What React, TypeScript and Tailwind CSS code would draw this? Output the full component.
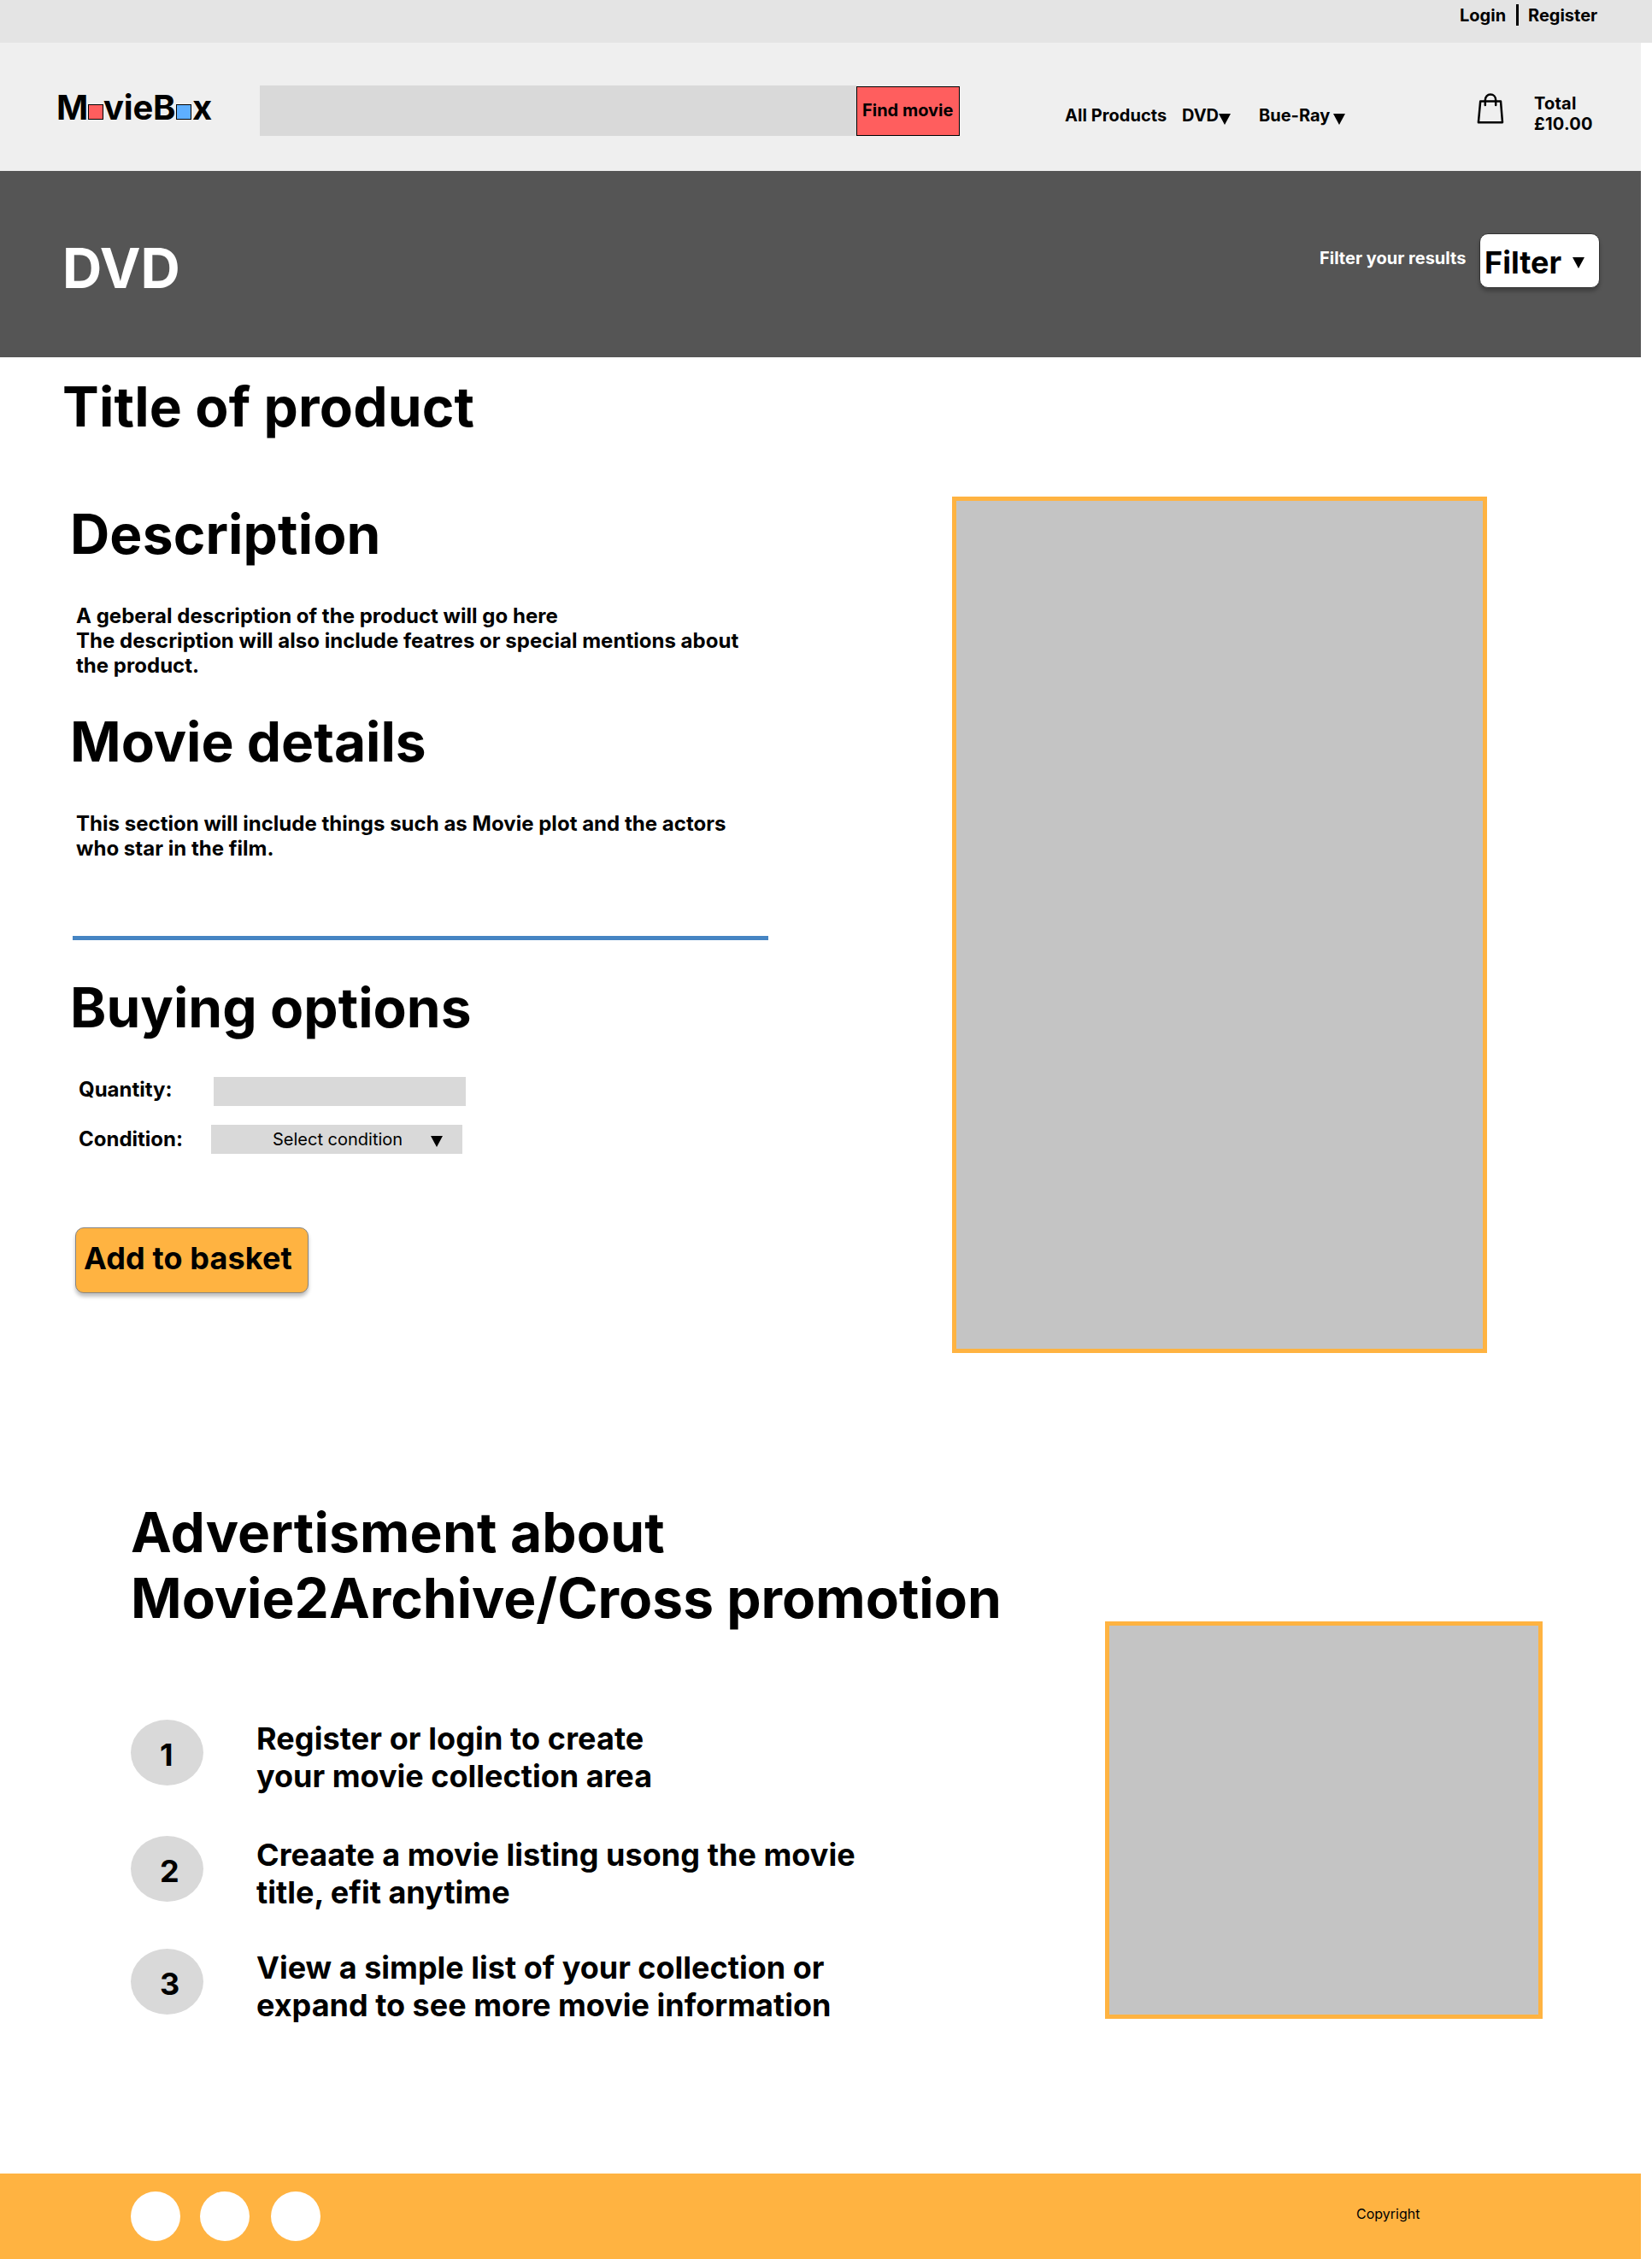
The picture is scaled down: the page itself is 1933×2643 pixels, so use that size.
import React from "react";

function Caret({ className = "" }: { className?: string }) {
  return (
    <svg viewBox="0 0 14 13" className={"h-[13px] w-[14px] shrink-0 " + className}>
      <path d="M0 0H14L7 13Z" fill="#000" />
    </svg>
  );
}

function BagIcon({ className = "" }: { className?: string }) {
  return (
    <svg
      viewBox="0 0 32 36"
      fill="none"
      stroke="#000"
      strokeWidth="2.5"
      strokeLinecap="round"
      strokeLinejoin="round"
      className={"h-[36px] w-[32px] shrink-0 " + className}
    >
      <path d="M4.2 9.4H28L30 34.2H1.9Z" />
      <path d="M9.8 14V8.2C9.8 4 12.6 1.5 16 1.5S22.2 4 22.2 8.2V14" />
    </svg>
  );
}

function TopBar() {
  return (
    <div className="flex h-[50px] w-full items-start bg-[#e4e4e4] pt-[6px] pl-[1708px] text-[20px] leading-[24px] font-bold">
      <a className="w-[66px]">Login</a>
      <span className="mt-[-1px] h-[25px] w-[3px] bg-black" />
      <a className="ml-[11px]">Register</a>
    </div>
  );
}

function Header() {
  return (
    <header className="flex h-[150px] w-[1920px] items-start bg-[#efefef] text-[20px] leading-[24px] font-bold">
      <div className="mt-[52px] ml-[66px] flex w-[238px] items-start text-[40px] leading-[48px]">
        <span className="w-[37px]">M</span>
        <span className="mt-[20px] h-[18px] w-[18px] shrink-0 border border-black bg-[#ff5e5e]" />
        <span className="w-[85px] tracking-[-0.2px]">vieB</span>
        <span className="mt-[20px] h-[18px] w-[18px] shrink-0 border border-black bg-[#5eafff]" />
        <span className="ml-px">x</span>
      </div>
      <div className="mt-[50px] h-[59px] w-[698px] bg-[#d9d9d9]" />
      <button className="mt-[51px] flex h-[58px] w-[121px] items-start border border-black bg-[#ff5e5e] pt-[15px] pl-[6px] font-bold whitespace-nowrap">
        Find movie
      </button>
      <nav className="mt-[73px] ml-[123px] flex items-start whitespace-nowrap">
        <a className="w-[137px] tracking-[0.05px]">All Products</a>
        <a className="flex w-[90px]">
          <span className="w-[43px]">DVD</span>
          <Caret className="mt-[10px]" />
        </a>
        <a className="flex w-[101px]">
          <span className="w-[87px]">Bue-Ray</span>
          <Caret className="mt-[10px]" />
        </a>
      </nav>
      <BagIcon className="mt-[59px] ml-[154px]" />
      <div className="mt-[59px] ml-[35px] tracking-[0.2px]">
        <div>Total</div>
        <div>£10.00</div>
      </div>
    </header>
  );
}

function CategoryBar() {
  return (
    <div className="flex h-[218px] w-[1920px] items-start bg-[#555555] font-bold text-white">
      <h1 className="mt-[75px] ml-[73px] w-[1471px] text-[64px] leading-[77px]">DVD</h1>
      <span className="mt-[90px] w-[187px] text-[20px] leading-[24px] whitespace-nowrap">
        Filter your results
      </span>
      <button className="mt-[73px] flex h-[64px] w-[141px] items-start rounded-[10px] border border-[#333] bg-white text-black shadow-[0_4px_4px_rgba(0,0,0,0.25)]">
        <span className="mt-[11px] ml-[5px] w-[103px] text-left text-[36px] leading-[44px] font-bold">
          Filter
        </span>
        <Caret className="mt-[27px]" />
      </button>
    </div>
  );
}

function Product() {
  return (
    <section className="flex h-[1336px] w-[1920px] items-start">
      <div className="w-[1114px] pt-[19px] text-[24px] leading-[29px] font-bold">
        <h2 className="ml-[73px] text-[64px] leading-[77px] tracking-[0.16px]">Title of product</h2>
        <h2 className="mt-[72px] ml-[82px] text-[64px] leading-[77px] tracking-[0.15px]">Description</h2>
        <p className="mt-[43px] ml-[89px] tracking-[0.025px] whitespace-nowrap">
          A geberal description of the product will go here
          <br />
          The description will also include featres or special mentions about
          <br />
          the product.
        </p>
        <h2 className="mt-[36px] ml-[82px] text-[64px] leading-[77px]">Movie details</h2>
        <p className="mt-[43px] ml-[89px] tracking-[0.025px] whitespace-nowrap">
          This section will include things such as Movie plot and the actors
          <br />
          who star in the film.
        </p>
        <div className="mt-[88px] ml-[85px] h-[5px] w-[814px] bg-[#4685c3]" />
        <h2 className="mt-[40px] ml-[82px] text-[64px] leading-[77px] tracking-[0.06px]">Buying options</h2>
        <div className="mt-[43px] ml-[92px] flex items-start">
          <span className="w-[158px]">Quantity:</span>
          <div className="h-[34px] w-[295px] bg-[#d9d9d9]" />
        </div>
        <div className="mt-[22px] ml-[92px] flex items-start">
          <span className="mt-[2px] w-[155px]">Condition:</span>
          <div className="flex h-[34px] w-[294px] items-start bg-[#d9d9d9] text-[20px] leading-[24px] font-normal">
            <span className="mt-[5px] ml-[72px] w-[185px]">Select condition</span>
            <Caret className="mt-[13px]" />
          </div>
        </div>
        <button className="mt-[86px] ml-[88px] flex h-[77px] w-[273px] items-start rounded-[10px] border border-[#858585] bg-[#ffb341] pt-[13px] pl-[9px] text-[36px] leading-[44px] font-bold tracking-[0.12px] whitespace-nowrap shadow-[0_4px_4px_rgba(0,0,0,0.25)]">
          Add to basket
        </button>
      </div>
      <div className="mt-[163px] h-[1002px] w-[626px] border-5 border-[#ffb341] bg-[#c4c4c4]" />
    </section>
  );
}

function Step({ n, className, children }: { n: number; className: string; children: React.ReactNode }) {
  return (
    <li className={"flex items-start " + className}>
      <span className="h-[77px] w-[85px] shrink-0 rounded-[50%] bg-[#d9d9d9] pt-[19px] pl-[34px]">{n}</span>
      <div className="ml-[62px] whitespace-nowrap">{children}</div>
    </li>
  );
}

function Promotion() {
  return (
    <section className="flex h-[789px] w-[1920px] items-start font-bold">
      <div className="w-[1293px]">
        <h2 className="ml-[153px] text-[64px] leading-[77px] whitespace-nowrap">
          <span className="tracking-[0.18px]">Advertisment about</span>
          <br />
          Movie2Archive/Cross promotion
        </h2>
        <ol className="mt-[104px] ml-[153px] text-[36px] leading-[44px]">
          <Step n={1} className="h-[136px]">
            <div className="tracking-[0.1px]">Register or login to create</div>
            <div>your movie collection area</div>
          </Step>
          <Step n={2} className="h-[132px]">
            <div className="tracking-[0.04px]">Creaate a movie listing usong the movie</div>
            <div>title, efit anytime</div>
          </Step>
          <Step n={3} className="h-[88px]">
            <div>View a simple list of your collection or</div>
            <div>expand to see more movie information</div>
          </Step>
        </ol>
      </div>
      <div className="mt-[143px] h-[465px] w-[512px] border-5 border-[#ffb341] bg-[#c4c4c4]" />
    </section>
  );
}

function Footer() {
  return (
    <footer className="flex h-[100px] w-[1920px] items-start bg-[#ffb341] pl-[153px]">
      <span className="mt-[21px] h-[58px] w-[58px] rounded-full bg-white" />
      <span className="mt-[21px] ml-[23px] h-[58px] w-[58px] rounded-full bg-white" />
      <span className="mt-[21px] ml-[25px] h-[58px] w-[58px] rounded-full bg-white" />
      <span className="mt-[38px] ml-[1212px] text-[16px] leading-[19px]">Copyright</span>
    </footer>
  );
}

export default function App() {
  return (
    <div className="h-[2643px] w-[1933px] overflow-hidden bg-white font-['Inter',sans-serif] text-black">
      <TopBar />
      <Header />
      <CategoryBar />
      <Product />
      <Promotion />
      <Footer />
    </div>
  );
}
